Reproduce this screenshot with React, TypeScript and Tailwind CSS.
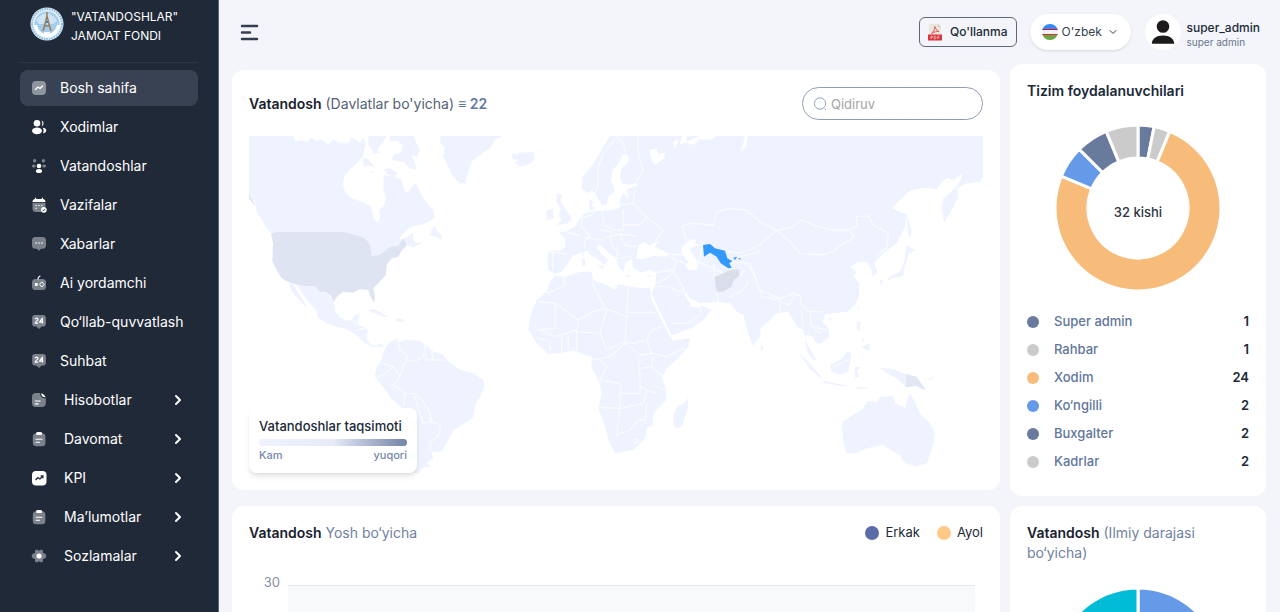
import type { ReactNode } from "react";
import { ChevronDown, ChevronRight } from "lucide-react";

type Segment = {
  label: string;
  value: number;
  color: string;
};

type MenuItem = {
  label: string;
  icon: ReactNode;
  active?: boolean;
  nested?: boolean;
};

const users: Segment[] = [
  { label: "Super admin", value: 1, color: "#697b9c" },
  { label: "Rahbar", value: 1, color: "#cbcbcb" },
  { label: "Xodim", value: 24, color: "#f8bc7a" },
  { label: "Ko‘ngilli", value: 2, color: "#659ae8" },
  { label: "Buxgalter", value: 2, color: "#697b9c" },
  { label: "Kadrlar", value: 2, color: "#cbcbcb" },
];

const degrees: Segment[] = [
  { label: "Magistr", value: 40, color: "#659ae8" },
  { label: "Boshqa", value: 20, color: "#697b9c" },
  { label: "Bakalavr", value: 40, color: "#00bcd6" },
];

function Icon({ children }: { children: ReactNode }) {
  return (
    <svg viewBox="0 0 16 16" className="h-4 w-4 shrink-0" aria-hidden="true">
      {children}
    </svg>
  );
}

const DashboardIcon = (
  <Icon>
    <rect x="1" y="1" width="14" height="14" rx="4" fill="#8f959f" />
    <path d="M4.5 9.5 7 7l2 1.5L11.5 6" fill="none" stroke="#fff" strokeWidth="1.3" strokeLinecap="round" strokeLinejoin="round" />
  </Icon>
);

const StaffIcon = (
  <Icon>
    <circle cx="6" cy="4.3" r="3.3" fill="#fff" />
    <ellipse cx="6" cy="11.8" rx="5" ry="3.4" fill="#fff" />
    <path d="M10.4 1.4a3 3 0 0 1 0 5.8 5 5 0 0 0 0-5.8ZM11.6 8.8c2.2.2 3.7 1.2 3.7 2.7 0 1.400-1.300 2.500-3.400 2.700 1.100-1.600 1-3.800-.3-5.400Z" fill="#fff" />
  </Icon>
);

const CommunityIcon = (
  <Icon>
    <circle cx="3.6" cy="2.7" r="1.7" fill="#7c828c" />
    <circle cx="12.4" cy="2.7" r="1.7" fill="#7c828c" />
    <ellipse cx="2.8" cy="8" rx="1.9" ry="1.6" fill="#7c828c" />
    <ellipse cx="13.2" cy="8" rx="1.9" ry="1.6" fill="#7c828c" />
    <circle cx="8" cy="8" r="2.3" fill="#fff" />
    <ellipse cx="8" cy="13" rx="3.1" ry="2" fill="#fff" />
  </Icon>
);

const TasksIcon = (
  <Icon>
    <path d="M1.5 5.8h13V10a4 4 0 0 0-4.3 5H5a3.500 3.500 0 0 1-3.500-3.500Z" fill="#7c828c" />
    <path d="M4 .8v1.200c-1.500.2-2.500 1.200-2.500 2.900h13c0-1.700-1-2.700-2.500-2.900V.8h-1.200V2H5.200V.8Z" fill="#fff" />
    <path d="M4.5 8.500h1.200M7.400 8.500h1.200M4.500 11.300h1.200M10.300 8.500h1.200" stroke="#fff" strokeWidth="1.2" />
    <circle cx="12.8" cy="12.8" r="2.9" fill="#fff" />
    <path d="m11.5 12.800 1 1 1.700-1.800" fill="none" stroke="#202938" strokeWidth=".9" />
  </Icon>
);

const MessageIcon = (
  <Icon>
    <path d="M4.500 1h7A3.500 3.500 0 0 1 15 4.500v4.700a3.500 3.500 0 0 1-3.500 3.500h-1.300L8 14.800l-2.200-2.100H4.500A3.500 3.500 0 0 1 1 9.200V4.500A3.500 3.500 0 0 1 4.500 1Z" fill="#7c828c" />
    <path d="M4.500 7h1.200M7.400 7h1.200M10.300 7h1.200" stroke="#fff" strokeWidth="1.3" />
  </Icon>
);

const AiIcon = (
  <Icon>
    <rect x="1" y="4" width="14" height="11" rx="3.5" fill="#7c828c" />
    <path d="M7 4c0-1.500.7-2.400 2-3" fill="none" stroke="#fff" strokeWidth="1.2" strokeLinecap="round" />
    <rect x="3.8" y="7.9" width="3" height="3" rx="1" fill="#fff" />
    <path d="m10.800 6.800 2.300 2.600-2.300 2.600-2.300-2.600Z" fill="none" stroke="#fff" strokeWidth="1" />
  </Icon>
);

const SupportIcon = (
  <Icon>
    <path d="M4 1h8a2.800 2.800 0 0 1 2.800 2.800v6A2.800 2.800 0 0 1 12 12.600h-1.300L8 15l-2.700-2.400H4a2.800 2.800 0 0 1-2.800-2.800v-6A2.800 2.800 0 0 1 4 1Z" fill="#7c828c" />
    <path d="M4.200 5.300c0-1.500 2.800-1.500 2.800.1 0 1.200-2.800 1.900-2.800 3.800h3M11.400 9.600V4.200L8.600 8.200h3.800" fill="none" stroke="#fff" strokeWidth="1.2" strokeLinejoin="round" />
  </Icon>
);

const ReportIcon = (
  <Icon>
    <path d="M5 1h4.200c0 3.800 1.500 5.300 5.600 5.300V11a4 4 0 0 1-4 4H5a4 4 0 0 1-4-4V5a4 4 0 0 1 4-4Z" fill="#7c828c" />
    <path d="M10.300 1.200c1.700.5 3.700 2.300 4.400 4-2.900 0-4.400-1-4.400-4Z" fill="#fff" />
    <path d="M4.200 9h5M4.200 11.900h3" stroke="#fff" strokeWidth="1.1" strokeLinecap="round" />
  </Icon>
);

const ClipboardIcon = (
  <Icon>
    <rect x="1.8" y="2.2" width="12.6" height="13" rx="3.5" fill="#7c828c" />
    <rect x="5" y=".9" width="6.2" height="3.2" rx="1.5" fill="#fff" />
    <path d="M5 8.300h6M5 11.200h3.600" stroke="#fff" strokeWidth="1.1" strokeLinecap="round" />
  </Icon>
);

const KpiIcon = (
  <Icon>
    <rect x="1" y="1" width="14.5" height="14.5" rx="4" fill="#fff" />
    <path d="m4.500 10 2.400-2.300 2 1.300 2.900-2.800M9.700 6h2.200v2.200" fill="none" stroke="#202938" strokeWidth="1.3" />
  </Icon>
);

const SettingsIcon = (
  <Icon>
    <path d="M8 2.700 10 1.400l2 1.200v2.300l2.400.9 1 2.200-1 2.200-2.400.9v2.300l-2 1.200-2-1.300-2 1.300-2-1.200v-2.300l-2.400-.9-1-2.200 1-2.200L4 4.900V2.600l2-1.200Z" fill="#7c828c" />
    <circle cx="8" cy="8" r="2.6" fill="#fff" />
  </Icon>
);

const menu: MenuItem[] = [
  { label: "Bosh sahifa", icon: DashboardIcon, active: true },
  { label: "Xodimlar", icon: StaffIcon },
  { label: "Vatandoshlar", icon: CommunityIcon },
  { label: "Vazifalar", icon: TasksIcon },
  { label: "Xabarlar", icon: MessageIcon },
  { label: "Ai yordamchi", icon: AiIcon },
  { label: "Qo‘llab-quvvatlash", icon: SupportIcon },
  { label: "Suhbat", icon: SupportIcon },
  { label: "Hisobotlar", icon: ReportIcon, nested: true },
  { label: "Davomat", icon: ClipboardIcon, nested: true },
  { label: "KPI", icon: KpiIcon, nested: true },
  { label: "Ma’lumotlar", icon: ClipboardIcon, nested: true },
  { label: "Sozlamalar", icon: SettingsIcon, nested: true },
];

function Logo() {
  return (
    <svg viewBox="0 0 34 34" className="h-[34px] w-[34px] shrink-0" aria-hidden="true">
      <circle cx="17" cy="17" r="16.5" fill="#e3f1fb" />
      <circle cx="17" cy="17" r="15" fill="none" stroke="#8dbbe0" strokeWidth="2" strokeDasharray="1.5 1" />
      <circle cx="17" cy="17" r="12.5" fill="#a5cdec" />
      <path d="M6 13c4-5 7-6 11-7 5 2 8 4 10 8l-4 3H9Z" fill="#cfe5f6" />
      <path d="M5.500 18c1 6 5 9.500 10 10.500M28.500 18c-1 6-5 9.500-10 10.500" fill="none" stroke="#fff" strokeWidth="3" />
      <path d="M17 5v5M17 9l-1.500 6-2.500 9M17 9l1.500 6 2.500 9M15.500 15h3M14.500 19h5" fill="none" stroke="#9a7d5a" strokeWidth="1.5" />
      <path d="M14 25h6l-1.500 5h-3Z" fill="#fff" />
      <circle cx="17" cy="15" r="1.2" fill="#4f7fb5" />
    </svg>
  );
}

function Sidebar() {
  return (
    <aside className="w-[219px] shrink-0 border-r border-[#5c6574] bg-[#202938] px-5 text-white">
      <div className="flex h-[63px] items-start gap-[7px] border-b border-[#2e3747] pl-[10px] pt-[7px]">
        <Logo />
        <p className="text-xs leading-[19px]">
          "VATANDOSHLAR"
          <br />
          JAMOAT FONDI
        </p>
      </div>
      <nav className="flex flex-col gap-[3px] pt-[7px]">
        {menu.map(({ label, icon, active, nested }) => (
          <a
            key={label}
            href="#"
            className={`flex h-9 items-center rounded-lg pl-[11px] pr-3 text-sm ${
              active ? "bg-[#394253]" : ""
            }`}
          >
            {icon}
            <span className={nested ? "ml-[17px]" : "ml-[13px]"}>{label}</span>
            {nested && <ChevronRight className="ml-auto h-4 w-4" strokeWidth={3} />}
          </a>
        ))}
      </nav>
    </aside>
  );
}

function PdfIcon() {
  return (
    <svg viewBox="0 0 14 18" className="h-[18px] w-[14px]" aria-hidden="true">
      <path d="M1 1h9l3 3v9H1Z" fill="#e9e6dd" />
      <path d="M10 1v3h3Z" fill="#d0ccc0" />
      <path d="M3.500 10.500C5.500 9 7 6 6.800 3.500c1 3 2.500 4.500 4.200 5-2-.2-5 .3-7.500 2Z" fill="none" stroke="#e05555" strokeWidth="1" />
      <rect y="11.5" width="14" height="6" fill="#d8373d" />
      <path d="M3 16v-3h1.300v1.600H3M6.200 13v3h.8c1.200 0 1.200-3 0-3ZM9.800 16v-3h1.700M9.800 14.500h1.400" fill="none" stroke="#f6c9ca" strokeWidth=".7" />
    </svg>
  );
}

function UzFlag() {
  return (
    <svg viewBox="0 0 16 16" className="h-4 w-4" aria-hidden="true">
      <clipPath id="flag">
        <circle cx="8" cy="8" r="8" />
      </clipPath>
      <g clipPath="url(#flag)">
        <rect width="16" height="16" fill="#f2eef2" />
        <rect width="16" height="5.3" fill="#338af3" />
        <rect y="5" width="16" height=".9" fill="#d80027" />
        <rect y="10" width="16" height=".9" fill="#d80027" />
        <rect y="10.8" width="16" height="5.2" fill="#6da544" />
      </g>
    </svg>
  );
}

function Header() {
  return (
    <header className="flex h-16 items-center pl-2 pr-[6px]">
      <button type="button" aria-label="Menu">
        <svg viewBox="0 0 19 17" className="h-[17px] w-[19px]" aria-hidden="true">
          <path d="M2 2h15M2 8.500h8M2 15h15" stroke="#343e50" strokeWidth="2.5" strokeLinecap="round" />
        </svg>
      </button>
      <button
        type="button"
        className="ml-auto flex h-[30px] items-center gap-2 rounded-md border border-[#5f6878] px-2 text-xs font-medium text-[#202938]"
      >
        <PdfIcon />
        Qo'llanma
      </button>
      <div className="relative ml-[13px]">
        <span className="pointer-events-none absolute left-3 top-[10px]">
          <UzFlag />
        </span>
        <select
          aria-label="Til"
          className="h-9 w-[101px] appearance-none rounded-full bg-white pl-8 pr-6 text-xs text-[#353f50] shadow-sm"
        >
          <option>O'zbek</option>
        </select>
        <ChevronDown className="pointer-events-none absolute right-3 top-3 h-3 w-3 text-[#353f50]" />
      </div>
      <div className="ml-[14px] flex items-center gap-[6px]">
        <span className="flex h-9 w-9 items-center justify-center rounded-full bg-white">
          <svg viewBox="0 0 24 24" className="h-6 w-6" fill="#1d1a1c" aria-hidden="true">
            <circle cx="12" cy="6.5" r="6.3" />
            <path d="M.8 23.800c0-5 4.500-8.300 11.200-8.300s11.200 3.300 11.200 8.300Z" />
          </svg>
        </span>
        <div className="pt-1">
          <p className="text-xs font-medium leading-[15px] text-[#202938]">super_admin</p>
          <p className="text-[10px] leading-[14px] text-[#67748c]">super admin</p>
        </div>
      </div>
    </header>
  );
}

function Card({ className = "", children }: { className?: string; children: ReactNode }) {
  return <section className={`rounded-xl bg-white ${className}`}>{children}</section>;
}

function WorldMap() {
  return (
    <svg viewBox="27 18 2202 1011" className="block w-full" fill="#eff3ff" role="img" aria-label="Davlatlar xaritasi">
      {/* Americas */}
      <path d="M27 18H160L165 35 185 30 200 37 212 24 230 32 245 28 265 44 280 28 300 40 325 40 335 22 350 30 358 40 370 22 377 45 370 75 355 95 335 115 315 135 308 160 315 185 335 205 365 215 390 228 398 245 400 265 412 278 420 265 418 240 432 225 440 205 430 180 430 150 432 135 465 142 485 150 490 175 500 190 515 170 528 160 545 195 560 218 580 240 585 262 570 275 540 285 510 292 490 310 475 332 500 322 520 308 518 325 528 340 552 335 520 352 500 345 485 362 475 380 395 378 108 306 95 312 85 300 70 275 50 245 45 215 27 195Z" />
      <path d="M385 18H440L430 35 412 58 418 68 400 72 392 50 385 45ZM450 18H520L530 40 540 60 530 80 515 75 525 100 530 120 510 115 490 95 455 90 460 75 480 68 490 45 470 32 450 35ZM370 82 385 88 405 112 385 105 370 110ZM430 118 450 115 475 130 462 142 440 132ZM390 125 400 122 402 130ZM568 315 582 285 590 300 605 318 605 328 585 320ZM70 278 88 288 98 305 85 300ZM382 540 405 538 430 552 445 560 430 560 400 548ZM465 570 478 564 497 572 480 577Z" />
      <path d="M602 18H790L765 30 750 55 720 75 695 95 685 125 675 160 660 160 640 140 625 110 610 80 614 50 600 40Z" />
      <path d="M145 460 195 465 225 468 240 487 260 488 282 515 285 545 300 562 320 572 335 570 345 555 360 550 355 570 350 585 370 590 385 600 380 625 390 642 405 648 425 640 432 652 420 650 400 652 375 640 350 615 320 597 290 590 260 580 235 565 230 545 210 520 190 495 172 467 160 462 175 490 202 530 195 530 170 500 158 488Z" />
      <path d="M408 715 425 690 432 660 450 635 475 625 470 640 495 630 540 632 555 645 575 662 610 675 625 695 660 720 700 730 730 750 733 770 720 800 705 825 700 860 675 880 640 900 625 930 605 965 575 965 580 985 560 1000 575 1008 545 1015 535 1029H520L505 900 495 840 475 825 450 800 425 765 405 740Z" />
      <path
        fill="#dfe4f2"
        d="M93 312 108 306H310L345 315 375 325 390 345 395 378 420 375 450 350 475 348 490 325 500 345 485 362 475 380 455 385 440 405 438 435 415 460 400 475 405 500 403 520 392 500 385 480 360 478 340 488 310 485 290 500 282 515 270 495 255 485 240 487 225 468H195L150 458 125 445 105 410 97 395 99 340ZM27 192 48 228 40 222 27 205Z"
      />

      {/* Europe, Africa and Asia */}
      <g transform="translate(780 0)">
        <path d="M37 70 50 74 60 66 78 68 100 64 105 85 92 100 65 110 45 100 55 90 37 86ZM170 190 186 195 182 215 205 250 215 265 205 280 172 286 185 270 176 255 182 238 170 215ZM140 242 160 235 160 265 140 272ZM520 860 530 830 553 820 562 803 565 830 545 890 530 894 520 885ZM245 385 255 387 255 408 247 408ZM248 365 254 372 250 380ZM290 405 312 408 308 418ZM268 208 280 215 274 232 285 230 285 240 268 240ZM375 435 400 437 378 440ZM440 438 455 433 448 442Z" />
        <path d="M330 18 310 50 285 95 248 140 245 175 260 190 275 182 285 190 300 215 305 227 320 222 325 200 345 182 333 150 338 120 360 95 365 75 385 76 386 95 365 115 360 140 365 160 385 165 410 158 413 166 380 178 385 205 370 190 360 205 362 230 340 240 300 242 270 245 250 252 240 265 225 290 205 300 178 307 195 325 197 350 180 362 145 362 142 395 145 420 165 432 185 425 205 400 215 378 240 370 262 362 275 378 300 392 310 405 325 390 305 372 290 352 298 342 325 368 350 385 358 415 372 427 375 400 395 385 400 415 425 428 450 420 468 428 468 460 455 490 475 535 500 585 515 617 580 592 610 570 635 540 605 527 600 533 575 530 555 495 550 480 570 505 600 520 650 515 690 520 715 550 730 552 738 590 758 647 780 620 782 595 810 570 830 550 865 545 880 570 890 590 910 600 920 640 935 665 948 690 942 692 925 670 915 640 918 615 935 618 950 640 965 640 988 620 985 595 968 575 975 553 1000 550 1040 545 1065 525 1078 495 1078 460 1060 437 1070 425 1050 410 1075 395 1100 395 1115 420 1118 442 1132 425 1122 400 1150 370 1190 340 1215 290 1220 252 1200 245 1175 235 1205 205 1230 182 1275 173 1310 178 1330 150 1345 143 1360 152 1385 130 1382 150 1365 175 1330 205 1325 235 1332 278 1355 240 1375 200 1372 175 1400 160 1440 155 1450 140V18Z" />
        <path d="M165 438 195 440 240 425 275 425 280 450 320 465 345 480 355 462 390 470 430 475 448 472 455 510 480 560 500 600 518 632 570 625 565 650 530 690 500 715 485 740 497 775 498 810 460 850 458 885 440 895 435 925 400 960 345 970 325 930 315 890 295 835 305 790 298 755 275 715 275 680 250 672 220 662 180 670 145 672 110 640 85 600 90 560 110 510 140 485 150 455Z" />
        <path fill="#fff" d="M410 375 415 345 435 335 448 347 478 330 465 350 505 370 500 380 460 378 430 388 408 386ZM545 350 570 330 588 328 585 348 568 358 590 390 590 420 570 420 555 408 565 395 545 370ZM447 60 470 55 475 72 495 68 492 85 465 105 455 90ZM520 35 535 30 525 60ZM540 45 560 35 600 18 500 18 545 18ZM560 18H650L630 30 600 28 580 45 560 38ZM735 18H745L738 50 720 65 730 40Z" />
        <path d="M1220 255 1227 275 1235 300 1230 325 1225 318ZM1220 345 1245 360 1225 372 1222 390 1213 415 1210 438 1165 446 1168 440 1200 425 1213 395ZM1138 450 1150 452 1145 468ZM1160 447 1175 445 1165 453ZM1072 525 1078 528 1075 540ZM985 565 998 565 990 573ZM1070 575 1082 575 1078 605 1070 595ZM1085 650 1108 640 1108 662 1098 660ZM1085 625 1095 632 1088 638ZM780 643 792 655 784 662ZM990 705 1020 690 1045 662 1055 675 1045 725 1020 735 995 725ZM895 670 925 695 960 735 965 748 935 722ZM970 752 1020 763 1040 768 1020 768 970 760ZM1065 710 1085 712 1070 720 1078 740 1065 745ZM1060 770 1110 775 1080 778ZM1140 715 1165 715 1200 725 1218 733 1218 772 1185 742 1160 730ZM1280 750 1302 738 1298 748Z" />
        <path d="M1025 875 1060 855 1085 840 1105 812 1130 815 1140 800 1180 797 1185 820 1215 833 1228 790 1240 805 1260 850 1290 880 1305 910 1300 945 1280 1000 1250 1009 1215 1000 1200 975 1180 965 1150 945 1100 955 1070 970 1038 970 1030 930Z" />
        <path fill="#e2e8f3" d="M1218 732 1250 740 1278 780 1262 775 1250 768 1218 772Z" />

        <g fill="none" stroke="#fafbff" strokeWidth="4" strokeLinejoin="round">
          <path d="M345 30 310 70 295 110 295 160 285 190M378 75 370 40 350 22M415 20 415 80 430 120 410 155M245 255 245 290 270 320 255 330 252 355M305 243 312 285 345 300 370 300 370 240M370 285 420 285 440 262 400 220 405 180M365 225 400 218M440 262 490 300 465 335M255 322 300 330 330 318 360 312 410 318M300 300 335 305M330 320 340 350 360 375M360 312 375 345 410 350M350 350 350 400M360 385 395 378M145 365 200 372M158 370 158 420M180 300 240 318 M245 265 285 250" />
          <path d="M515 378 530 400 520 420 468 428M505 372 550 375M515 385 555 400M520 420 545 465 555 490M470 462 500 445 520 425M470 470 505 470 550 490M590 395 640 415 670 430M590 415 610 345M645 440 640 400M650 485 655 515M700 450 715 440 735 420M515 580 560 580 600 555M600 530 605 555M550 300 545 290 570 280 640 285 650 245 690 235 740 240 780 275 830 300 780 345 745 360 720 370 680 362M550 300 555 325 590 345 610 345" />
          <path d="M740 400 760 430 780 480 840 505 880 490 905 500 900 520 925 545 970 545M835 300 880 290 905 270 950 290 1000 300 1045 300 1070 290 1070 260 1105 258 1120 285 1165 310 1160 355 1130 375M830 300 870 335 900 370 960 375 1000 365 1030 340 1065 322 1045 300M780 480 785 500 840 510 840 545M840 515 865 525 885 495M905 540 910 590M930 550 935 590 980 600M700 385 780 365M700 395 745 400M750 400 770 450M690 500 730 480 745 455M945 600 965 610M1000 712 1045 690" />
          <path d="M165 520 165 595 110 600M115 515 165 520M190 440 195 465 140 490M165 520 235 570 280 545 315 535 275 455M315 535 380 560 385 470M385 547 470 547M380 560 375 635 400 640 440 630 455 600 485 590M235 570 230 605 300 610 320 540M230 605 230 665M300 610 320 660 375 635M275 690 330 680 375 640 420 675 455 670 500 680 550 655M300 690 320 710 300 750 360 760 365 790 420 790 420 740 415 680M420 715 455 710 490 740M455 710 460 680M455 670 440 630M295 832 360 835 430 820 440 780 420 770M360 835 350 915 390 900 415 870 435 870 440 820M360 790 360 830M440 780 470 790M205 620 205 665M185 620 185 668M150 630 150 668M120 600 165 620 230 600M110 625 140 630M458 765 498 780M400 930 410 925 415 935 405 940Z" />
        </g>

        <path fill="#d8dfeb" d="M645 440 665 432 690 420 718 418 718 438 700 452 695 470 668 485 650 485 645 460Z" />
        <path fill="#3399fb" d="M609 345 630 342 645 355 675 362 682 385 697 393 688 400 695 413 685 415 662 400 650 380 630 368 612 380ZM700 383 712 380 705 390ZM714 385 723 385 720 389Z" />
      </g>

      <path fill="none" stroke="#fafbff" strokeWidth="4" d="M475 630 480 660 500 675 500 690 525 695 550 680 555 645M555 670 560 690 610 690M575 665 580 690M425 700 460 710 480 740 490 705 500 690M410 740 430 735 460 710M480 740 460 765 495 790 525 790 550 815 570 850 575 875 600 885 600 910 570 940 570 965M495 790 490 830M520 790 550 880 575 875M345 570 345 590M350 600 375 595" />
    </svg>
  );
}

function MapCard() {
  return (
    <Card className="p-[17px]">
      <div className="mb-4 flex items-center justify-between">
        <h2 className="text-sm text-[#566176]">
          <span className="font-semibold text-[#19212f]">Vatandosh</span> (Davlatlar bo'yicha){" "}
          <span className="font-semibold text-[#5f789f]">≡ 22</span>
        </h2>
        <div className="relative">
          <svg viewBox="0 0 14 14" className="absolute left-[11px] top-[10px] h-[14px] w-[14px]" fill="none" stroke="#93a1bd" aria-hidden="true">
            <circle cx="7" cy="6.5" r="5.7" />
            <path d="m11.500 11.500 1.500 1.500" />
          </svg>
          <input
            type="search"
            aria-label="Qidiruv"
            placeholder="Qidiruv"
            className="block h-[33px] w-[181px] rounded-full border border-[#929db8] pl-7 pr-3 text-[13px] placeholder:text-[#a5a5a5]"
          />
        </div>
      </div>
      <div className="relative">
        <WorldMap />
        <div className="absolute bottom-0 left-0 w-[168px] rounded-lg bg-white px-[10px] pb-[10px] pt-[9px] shadow-md">
          <h3 className="text-[13px] font-medium leading-[18px] text-[#202938]">Vatandoshlar taqsimoti</h3>
          <div className="mb-[2px] mt-1 h-[7px] rounded-full bg-linear-to-r from-[#eff3ff] via-[#e6ebf8] to-[#7284a8]" />
          <div className="flex justify-between text-[11px] font-medium leading-[15px] text-[#7588aa]">
            <span>Kam</span>
            <span>yuqori</span>
          </div>
        </div>
      </div>
    </Card>
  );
}

function slicePath(start: number, end: number, outer: number, inner: number) {
  const point = (turn: number, radius: number) => {
    const angle = turn * Math.PI * 2 - Math.PI / 2;
    return `${82 + radius * Math.cos(angle)} ${82 + radius * Math.sin(angle)}`;
  };
  const large = end - start > 0.5 ? 1 : 0;
  return `M${point(start, outer)}A${outer} ${outer} 0 ${large} 1 ${point(end, outer)}L${point(end, inner)}A${inner} ${inner} 0 ${large} 0 ${point(start, inner)}Z`;
}

function PieChart({ data, inner }: { data: Segment[]; inner: number }) {
  const total = data.reduce((sum, item) => sum + item.value, 0);
  let passed = 0;

  return (
    <svg viewBox="0 0 164 164" className="mx-auto block h-[164px] w-[164px] overflow-visible" aria-hidden="true">
      {data.map((item) => {
        const start = passed / total;
        passed += item.value;
        return (
          <path
            key={item.label}
            d={slicePath(start, passed / total, 83, inner)}
            fill={item.color}
            stroke="#fff"
            strokeWidth="3"
          />
        );
      })}
    </svg>
  );
}

function UsersCard() {
  const total = users.reduce((sum, item) => sum + item.value, 0);

  return (
    <Card className="px-[17px] pb-5 pt-[17px]">
      <h2 className="text-sm font-semibold leading-5 text-[#202938]">Tizim foydalanuvchilari</h2>
      <div className="relative mb-[18px] mt-[25px]">
        <PieChart data={users} inner={50} />
        <p className="absolute inset-0 flex items-center justify-center pt-[10px] text-[13px] font-medium text-[#2d3543]">
          {total} kishi
        </p>
      </div>
      <ul>
        {users.map(({ label, value, color }) => (
          <li key={label} className="flex h-7 items-center text-[13px] font-medium text-[#61769b]">
            <span className="mr-[15px] h-3 w-3 rounded-full" style={{ backgroundColor: color }} />
            {label}
            <span className="ml-auto font-semibold text-[#202938]">{value}</span>
          </li>
        ))}
      </ul>
    </Card>
  );
}

function AgeCard() {
  return (
    <Card className="p-[17px]">
      <div className="flex items-center justify-between">
        <h2 className="text-sm leading-5 text-[#71829f]">
          <span className="font-semibold text-[#19212f]">Vatandosh</span> Yosh bo‘yicha
        </h2>
        <div className="flex gap-[17px] text-[13px] text-[#202938]">
          <span className="flex items-center gap-[6px]">
            <i className="h-[14px] w-[14px] rounded-full bg-[#5a6ca8]" />
            Erkak
          </span>
          <span className="flex items-center gap-[6px]">
            <i className="h-[14px] w-[14px] rounded-full bg-[#fec987]" />
            Ayol
          </span>
        </div>
      </div>
      <div className="flex gap-2 pl-[14px] pr-2 pt-[30px] text-[13px] text-[#8a919f]">
        <span className="w-[17px] text-right leading-[18px]">30</span>
        <div className="mt-3 h-60 flex-1 border-t border-[#e8e9ec] bg-[#f8f9fb]" />
      </div>
    </Card>
  );
}

function DegreeCard() {
  return (
    <Card className="p-[17px]">
      <h2 className="mb-[26px] text-sm leading-5 text-[#71829f]">
        <span className="font-semibold text-[#19212f]">Vatandosh</span> (Ilmiy darajasi bo‘yicha)
      </h2>
      <PieChart data={degrees} inner={0} />
    </Card>
  );
}

export default function App() {
  return (
    <div className="flex h-screen overflow-hidden bg-[#f4f5fa] font-['Inter',sans-serif]">
      <Sidebar />
      <main className="min-w-0 flex-1 overflow-y-auto pl-[13px] pr-[14px] [scrollbar-width:none]">
        <Header />
        <div className="grid grid-cols-[3fr_1fr] items-start gap-[10px] pb-4">
          <div className="flex flex-col gap-4 pt-[6px]">
            <MapCard />
            <AgeCard />
          </div>
          <div className="flex flex-col gap-[10px]">
            <UsersCard />
            <DegreeCard />
          </div>
        </div>
      </main>
    </div>
  );
}
